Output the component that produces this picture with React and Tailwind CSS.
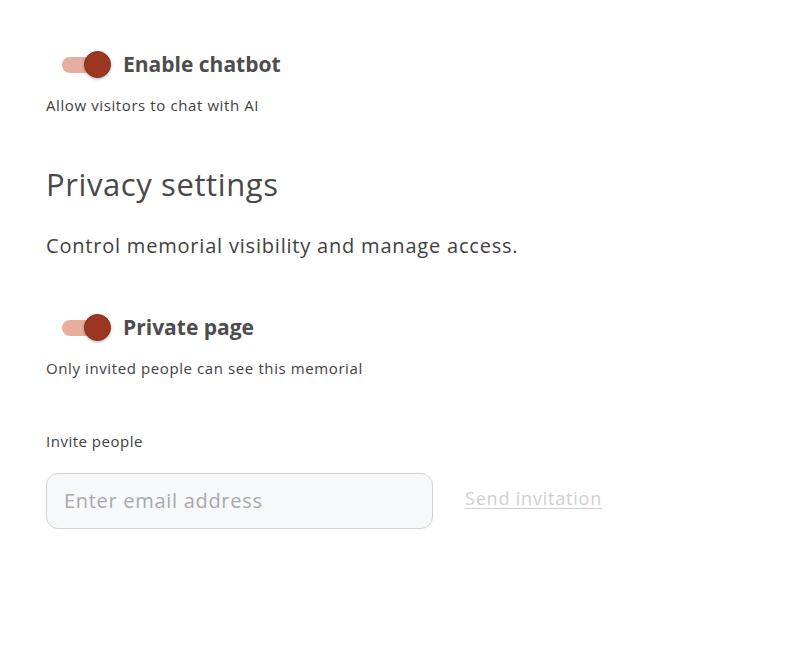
import React, { useState } from "react";

function Toggle({ on, onChange }) {
  return (
    <button
      type="button"
      onClick={onChange}
      className="relative w-[50px] h-[30px] flex items-center shrink-0"
      aria-pressed={on}
    >
      <span className="absolute left-[1px] w-[44px] h-[16px] rounded-full bg-[#e6ae9f]"></span>
      <span
        className={`absolute w-[27px] h-[27px] rounded-full bg-[#9b3720] border border-[#862c17] shadow-[0_1px_3px_rgba(0,0,0,0.3)] ${on ? "left-[23px]" : "left-0"}`}
      ></span>
    </button>
  );
}

function ToggleRow({ label, hint, on, onChange }) {
  return (
    <div className="flex flex-col">
      <div className="flex items-center gap-[12px] pl-[15px]">
        <Toggle on={on} onChange={onChange} />
        <span className="text-[21px] font-bold text-[#4d4d4d]">{label}</span>
      </div>
      <p className="mt-[13px] text-[15px] tracking-[0.6px] text-[#404040]">{hint}</p>
    </div>
  );
}

export default function App() {
  const [chatbot, setChatbot] = useState(true);
  const [privatePage, setPrivatePage] = useState(true);
  const [email, setEmail] = useState("");

  return (
    <div className="min-h-[656px] bg-white px-[46px] pt-[49px] font-['Open_Sans',sans-serif]">
      <ToggleRow
        label="Enable chatbot"
        hint="Allow visitors to chat with AI"
        on={chatbot}
        onChange={() => setChatbot((v) => !v)}
      />

      <h2 className="mt-[48px] text-[31px] leading-[40px] tracking-[0.6px] text-[#484848]">Privacy settings</h2>
      <p className="mt-[27px] text-[20px] tracking-[0.8px] text-[#404040]">Control memorial visibility and manage access.</p>

      <div className="mt-[51px]">
        <ToggleRow
          label="Private page"
          hint="Only invited people can see this memorial"
          on={privatePage}
          onChange={() => setPrivatePage((v) => !v)}
        />
      </div>

      <label className="block mt-[51px] text-[15px] tracking-[0.5px] text-[#404040]">Invite people</label>
      <div className="mt-[20px] flex items-center gap-[32px]">
        <input
          type="email"
          value={email}
          onChange={(e) => setEmail(e.target.value)}
          placeholder="Enter email address"
          className="w-[387px] h-[56px] rounded-[12px] border border-[#d4d4d8] bg-[#f7f8fa] px-[17px] text-[20px] tracking-[0.7px] text-[#404040] placeholder:text-[#a8a8ac] focus:outline-none"
        />
        <button type="button" className="mb-[5px] text-[18px] tracking-[0.8px] text-[#cfcfd2] underline underline-offset-[3px]">
          Send invitation
        </button>
      </div>
    </div>
  );
}
